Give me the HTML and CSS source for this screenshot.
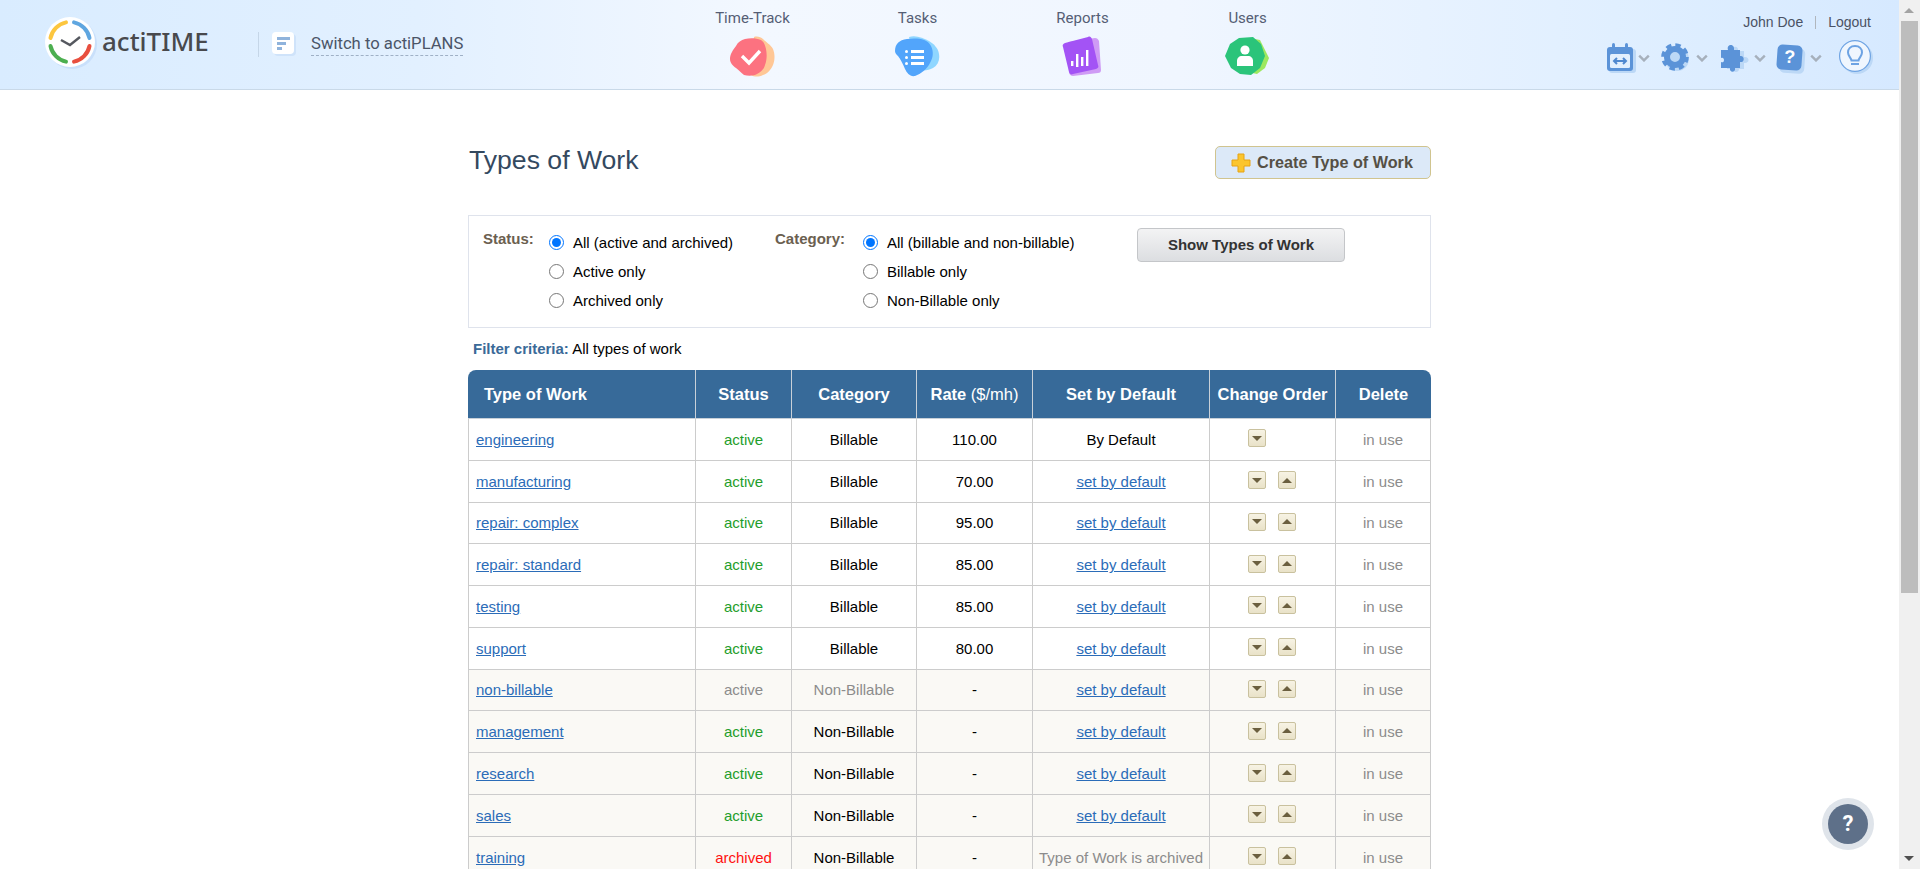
FILE: index.html
```html
<!DOCTYPE html>
<html lang="en">
<head>
  <meta charset="UTF-8">
  <title>actiTIME - Types of Work</title>
  <link rel="stylesheet" href="styles.css">
</head>
<body>
  <div class="page">
    <header class="topbar">
      <div class="brand">
        <svg class="logo" viewBox="0 0 56 56" width="56" height="56">
          <circle cx="28" cy="28" r="25" fill="#c9e0fb"/>
          <circle cx="26" cy="26" r="25" fill="#fff"/>
          <g fill="none" stroke-width="4" stroke-linecap="round">
            <path d="M6.5 22A20 20 0 0 1 22 6.4" stroke="#fcc63f"/>
            <path d="M30 6.4A20 20 0 0 1 45.5 22" stroke="#5fa6e0"/>
            <path d="M45.5 30A20 20 0 0 1 30 45.6" stroke="#e84f3f"/>
            <path d="M22 45.6A20 20 0 0 1 6.5 30" stroke="#4caf50"/>
          </g>
          <path d="M17 24l9 5 10-8" fill="none" stroke="#55585f" stroke-width="2.4"/>
        </svg>
        <span class="brand-name">actiTIME</span>
      </div>
      <div class="switch">
        <svg class="plans-icon" viewBox="0 0 24 24" width="24" height="24">
          <rect x="2" y="2" width="22" height="22" rx="4" fill="#cfe3fa"/>
          <rect x="0" y="0" width="22" height="22" rx="4" fill="#fff"/>
          <rect x="5" y="5" width="13" height="3" fill="#8fb3dc"/>
          <rect x="5" y="10" width="9" height="3" fill="#8fb3dc"/>
          <rect x="5" y="15" width="5" height="3" fill="#8fb3dc"/>
        </svg>
        <a class="switch-link">Switch to actiPLANS</a>
      </div>
      <nav class="nav">
        <div class="nav-item">
          <span class="nav-label">Time-Track</span>
          <svg viewBox="0 0 45 41" width="45" height="41">
            <path d="M24 1c3-1 7 0 9 2 3 3 8 6 10 10 2 5 2 11 0 16-2 5-6 9-10 10-4 2-9 2-12 0z" fill="#ffc796"/>
            <path d="M6 10c2-4 5-6 9-7 5-1 11-1 16 1 3 2 4 5 5 9 1 5 1 11-1 16-1 4-4 7-8 9-3 2-9 2-13 1-3-2-5-5-8-7-3-2-6-5-6-9 0-5 3-9 6-13z" fill="#fc7280"/>
            <path d="M11 21l7 7 11-12" fill="none" stroke="#fff" stroke-width="3.4" transform="translate(1 -1)"/>
          </svg>
        </div>
        <div class="nav-item">
          <span class="nav-label">Tasks</span>
          <svg viewBox="0 0 45 41" width="45" height="41">
            <path d="M14 1c7-2 14 1 20 4 5 3 9 7 10 13 1 6-1 11-6 14-5 3-12 3-17 1z" fill="#8fd6ff"/>
            <path d="M0 15C0 8 4 4 12 3c9-1 20-1 24 7 3 6 2 12-1 17-3 6-9 11-15 13-5 1-8-3-10-7-2-5-4-9-7-13-2-2-3-3-3-5z" fill="#52a5fb"/>
            <g fill="#fff">
              <rect x="10" y="14" width="3" height="3" rx="1.5"/><rect x="16" y="14" width="13" height="3"/>
              <rect x="10" y="20" width="3" height="3" rx="1.5"/><rect x="16" y="20" width="13" height="3"/>
              <rect x="10" y="26" width="3" height="3" rx="1.5"/><rect x="16" y="26" width="13" height="3"/>
            </g>
          </svg>
        </div>
        <div class="nav-item">
          <span class="nav-label">Reports</span>
          <svg viewBox="0 0 45 41" width="45" height="41">
            <path d="M8 6L35 2c2 0 3 1 4 3l2 29c0 2-1 3-3 3L13 40c-2 0-3-1-4-3z" fill="#cf9bf5"/>
            <path d="M5 7L28 1c2-1 3 0 4 2l6 26c1 2 0 3-2 4L13 38c-2 1-3 0-4-2L3 11c-1-2 0-3 2-4z" fill="#a353f5"/>
            <g fill="#fff">
              <rect x="11" y="25" width="2.4" height="5"/><rect x="16" y="18" width="2.4" height="13"/>
              <rect x="21" y="21" width="2.4" height="9"/><rect x="26" y="14" width="2.4" height="16"/>
            </g>
          </svg>
        </div>
        <div class="nav-item">
          <span class="nav-label">Users</span>
          <svg viewBox="0 0 45 41" width="45" height="41">
            <path d="M25 2l10 2 5 10 4 8-4 10-8 6-9-2z" fill="#9de85f"/>
            <path d="M14 2l14-1 8 7 4 12-5 12-9 7-11-1-9-6-6-12 5-12z" fill="#2bc47a"/>
            <circle cx="20" cy="14" r="4.6" fill="#fff"/>
            <path d="M12 30v-5c0-3 2-5 5-5h6c3 0 5 2 5 5v5z" fill="#fff"/>
          </svg>
        </div>
      </nav>
      <div class="tools">
        <div class="user-line">
          <span>John Doe</span><span class="user-sep"></span><span>Logout</span>
        </div>
        <div class="tool-row">
          <svg class="tool-icon" viewBox="0 0 30 30" width="30" height="30">
            <rect x="3" y="6" width="27" height="24" rx="3" fill="#bcd8f6"/>
            <rect x="1" y="4" width="26" height="24" rx="3" fill="#5b93d8"/>
            <rect x="6" y="0" width="3" height="7" rx="1.5" fill="#5b93d8"/>
            <rect x="19" y="0" width="3" height="7" rx="1.5" fill="#5b93d8"/>
            <rect x="4" y="11" width="20" height="14" rx="1.5" fill="#e2effd"/>
            <path d="M8 18h12M11 15l-3 3 3 3M17 15l3 3-3 3" fill="none" stroke="#4f88cf" stroke-width="2"/>
          </svg>
          <svg class="chevron chevron-first" viewBox="0 0 10 6" width="12" height="8"><path d="M1 1l4 4 4-4" fill="none" stroke="#a6b0bc" stroke-width="2"/></svg>
          <svg class="tool-icon" viewBox="0 0 30 30" width="30" height="30">
            <circle cx="16" cy="16" r="12" fill="#bcd8f6"/>
            <circle cx="14" cy="14" r="8" fill="none" stroke="#5b93d8" stroke-width="6"/>
            <circle cx="14" cy="14" r="12" fill="none" stroke="#5b93d8" stroke-width="3.6" stroke-dasharray="5.4 4.02"/>
          </svg>
          <svg class="chevron" viewBox="0 0 10 6" width="12" height="8"><path d="M1 1l4 4 4-4" fill="none" stroke="#a6b0bc" stroke-width="2"/></svg>
          <svg class="tool-icon" viewBox="0 0 30 30" width="30" height="30">
            <path d="M5 9h6c-2-5 6-6 5 0h6v6c6-1 6 7 0 6v6h-5c0 4-6 4-6 0H5z" fill="#bcd8f6" transform="translate(3 -1)"/>
            <path d="M2 7h7c-2-6 7-7 6 0h6v6c5-1 5 7 0 6v6h-5c1 5-6 5-5 0H2v-6c4 2 4-6 0-4z" fill="#5b93d8"/>
          </svg>
          <svg class="chevron" viewBox="0 0 10 6" width="12" height="8"><path d="M1 1l4 4 4-4" fill="none" stroke="#a6b0bc" stroke-width="2"/></svg>
          <span class="help-icon">?</span>
          <svg class="chevron" viewBox="0 0 10 6" width="12" height="8"><path d="M1 1l4 4 4-4" fill="none" stroke="#a6b0bc" stroke-width="2"/></svg>
          <svg class="tool-bulb" viewBox="0 0 36 36" width="36" height="36">
            <circle cx="19" cy="19" r="16" fill="#bcd8f6"/>
            <circle cx="17" cy="17" r="15.4" fill="#eff6fe" stroke="#6da3e3" stroke-width="1.2"/>
            <path d="M17 7c-4.5 0-7 3-7 6.500 0 3.500 3 5 3.500 8h7c.5-3 3.500-4.500 3.500-8C24 10 21.500 7 17 7z" fill="none" stroke="#6da3e3" stroke-width="2"/>
            <path d="M13 25h8" stroke="#6da3e3" stroke-width="2"/>
          </svg>
        </div>
      </div>
    </header>

    <main class="content">
      <div class="title-row">
        <h1>Types of Work</h1>
        <button class="create-btn">
          <svg viewBox="0 0 20 20" width="20" height="20">
            <path d="M7 1h6v6h6v6h-6v6H7v-6H1V7h6z" fill="#fbc52d" stroke="#e6a315"/>
          </svg>
          Create Type of Work
        </button>
      </div>

      <form class="filter">
        <span class="filter-label status-label">Status:</span>
        <div class="radio-col status-col">
          <label><input type="radio" name="status" checked> All (active and archived)</label>
          <label><input type="radio" name="status"> Active only</label>
          <label><input type="radio" name="status"> Archived only</label>
        </div>
        <span class="filter-label category-label">Category:</span>
        <div class="radio-col category-col">
          <label><input type="radio" name="category" checked> All (billable and non-billable)</label>
          <label><input type="radio" name="category"> Billable only</label>
          <label><input type="radio" name="category"> Non-Billable only</label>
        </div>
        <button type="button" class="show-btn">Show Types of Work</button>
      </form>

      <p class="criteria"><b>Filter criteria:</b> All types of work</p>

      <table class="work-table">
        <colgroup>
          <col class="c-name"><col class="c-status"><col class="c-cat"><col class="c-rate">
          <col class="c-def"><col class="c-order"><col class="c-del">
        </colgroup>
        <thead>
          <tr>
            <th class="th-name">Type of Work</th>
            <th>Status</th>
            <th>Category</th>
            <th>Rate <span class="unit">($/mh)</span></th>
            <th>Set by Default</th>
            <th>Change Order</th>
            <th>Delete</th>
          </tr>
        </thead>
        <tbody>
          <tr>
            <td class="name"><a>engineering</a></td><td class="on">active</td><td>Billable</td><td>110.00</td>
            <td>By Default</td>
            <td class="order"><div class="order-btns"><span class="arrow"><i class="down"></i></span><span class="arrow-gap"></span></div></td>
            <td class="muted">in use</td>
          </tr>
          <tr>
            <td class="name"><a>manufacturing</a></td><td class="on">active</td><td>Billable</td><td>70.00</td>
            <td><a>set by default</a></td>
            <td class="order"><div class="order-btns"><span class="arrow"><i class="down"></i></span><span class="arrow"><i class="up"></i></span></div></td>
            <td class="muted">in use</td>
          </tr>
          <tr>
            <td class="name"><a>repair: complex</a></td><td class="on">active</td><td>Billable</td><td>95.00</td>
            <td><a>set by default</a></td>
            <td class="order"><div class="order-btns"><span class="arrow"><i class="down"></i></span><span class="arrow"><i class="up"></i></span></div></td>
            <td class="muted">in use</td>
          </tr>
          <tr>
            <td class="name"><a>repair: standard</a></td><td class="on">active</td><td>Billable</td><td>85.00</td>
            <td><a>set by default</a></td>
            <td class="order"><div class="order-btns"><span class="arrow"><i class="down"></i></span><span class="arrow"><i class="up"></i></span></div></td>
            <td class="muted">in use</td>
          </tr>
          <tr>
            <td class="name"><a>testing</a></td><td class="on">active</td><td>Billable</td><td>85.00</td>
            <td><a>set by default</a></td>
            <td class="order"><div class="order-btns"><span class="arrow"><i class="down"></i></span><span class="arrow"><i class="up"></i></span></div></td>
            <td class="muted">in use</td>
          </tr>
          <tr>
            <td class="name"><a>support</a></td><td class="on">active</td><td>Billable</td><td>80.00</td>
            <td><a>set by default</a></td>
            <td class="order"><div class="order-btns"><span class="arrow"><i class="down"></i></span><span class="arrow"><i class="up"></i></span></div></td>
            <td class="muted">in use</td>
          </tr>
          <tr class="nonbill">
            <td class="name"><a>non-billable</a></td><td class="muted">active</td><td class="muted">Non-Billable</td><td>-</td>
            <td><a>set by default</a></td>
            <td class="order"><div class="order-btns"><span class="arrow"><i class="down"></i></span><span class="arrow"><i class="up"></i></span></div></td>
            <td class="muted">in use</td>
          </tr>
          <tr class="nonbill">
            <td class="name"><a>management</a></td><td class="on">active</td><td>Non-Billable</td><td>-</td>
            <td><a>set by default</a></td>
            <td class="order"><div class="order-btns"><span class="arrow"><i class="down"></i></span><span class="arrow"><i class="up"></i></span></div></td>
            <td class="muted">in use</td>
          </tr>
          <tr class="nonbill">
            <td class="name"><a>research</a></td><td class="on">active</td><td>Non-Billable</td><td>-</td>
            <td><a>set by default</a></td>
            <td class="order"><div class="order-btns"><span class="arrow"><i class="down"></i></span><span class="arrow"><i class="up"></i></span></div></td>
            <td class="muted">in use</td>
          </tr>
          <tr class="nonbill">
            <td class="name"><a>sales</a></td><td class="on">active</td><td>Non-Billable</td><td>-</td>
            <td><a>set by default</a></td>
            <td class="order"><div class="order-btns"><span class="arrow"><i class="down"></i></span><span class="arrow"><i class="up"></i></span></div></td>
            <td class="muted">in use</td>
          </tr>
          <tr class="nonbill">
            <td class="name"><a>training</a></td><td class="off">archived</td><td>Non-Billable</td><td>-</td>
            <td class="muted">Type of Work is archived</td>
            <td class="order"><div class="order-btns"><span class="arrow"><i class="down"></i></span><span class="arrow"><i class="up"></i></span></div></td>
            <td class="muted">in use</td>
          </tr>
        </tbody>
      </table>
    </main>
    <div class="help-float">?</div>
  </div>

  <div class="scrollbar">
    <span class="sb-arrow sb-up"></span>
    <span class="sb-thumb"></span>
    <span class="sb-arrow sb-down"></span>
  </div>
</body>
</html>
```

FILE: styles.css
```css
html, body {
  margin: 0;
  height: 100%;
  overflow: hidden;
}
body {
  display: flex;
  font-family: "Liberation Sans", Arial, sans-serif;
  font-size: 15px;
  color: #000;
  background: #fff;
}
.page {
  flex: 1;
  min-width: 0;
  height: 100%;
  overflow: hidden;
  position: relative;
}

/* top bar */
.topbar {
  display: flex;
  height: 89px;
  border-bottom: 1px solid #c9d9e8;
  background: linear-gradient(90deg, #d9ecff 0%, #e2f0ff 22%, #f3f8ff 40%, #f0f6ff 62%, #e0efff 85%, #d6e9ff 100%);
}
.brand {
  display: flex;
  align-items: flex-start;
  padding: 16px 0 0 44px;
  width: 214px;
}
.logo {
  flex: none;
}
.brand-name {
  font-family: "Noto Sans", sans-serif;
  font-weight: 500;
  font-size: 26px;
  line-height: 50px;
  margin-left: 2px;
  color: #48494d;
}
.switch {
  display: flex;
  align-items: flex-start;
  width: 398px;
  height: 25px;
  margin-top: 32px;
  padding-left: 13px;
  border-left: 1px solid #c5d6e8;
}
.plans-icon {
  flex: none;
}
.switch-link {
  font-family: Roboto, sans-serif;
  font-size: 16.67px;
  line-height: 20px;
  margin: 2px 0 0 15px;
  padding-bottom: 1px;
  color: #4b5568;
  border-bottom: 1px dashed #9fb0c6;
}
.nav {
  display: flex;
  padding-top: 9px;
}
.nav-item {
  width: 165px;
  display: flex;
  flex-direction: column;
  align-items: center;
  gap: 9px;
}
.nav-label {
  font-family: Roboto, sans-serif;
  font-size: 15px;
  line-height: 18px;
  color: #555e75;
}
.tools {
  margin-left: auto;
  width: 294px;
  padding-right: 28px;
  display: flex;
  flex-direction: column;
  box-sizing: border-box;
}
.user-line {
  display: flex;
  justify-content: flex-end;
  align-items: center;
  height: 16px;
  margin-top: 14px;
  font-size: 14px;
  color: #4a5264;
}
.user-sep {
  width: 1px;
  height: 13px;
  margin: 0 12px;
  background: #b0b6bd;
}
.tool-row {
  display: flex;
  align-items: center;
  justify-content: flex-end;
  margin-top: 10px;
}
.tool-icon {
  flex: none;
}
.chevron {
  flex: none;
  margin: 0 11px 0 5px;
}
.chevron-first {
  margin-left: 2px;
}
.help-icon {
  width: 25px;
  height: 25px;
  margin-right: 3px;
  border-radius: 5px;
  background: #5b93d8;
  box-shadow: 3px 3px 0 #bcd8f6;
  color: #fff;
  font-weight: bold;
  font-size: 18px;
  line-height: 25px;
  text-align: center;
  transform: rotate(4deg);
}
.tool-bulb {
  flex: none;
  margin: -1px -3px 0 5px;
}

/* main */
.content {
  width: 963px;
  margin: 0 auto;
}
.title-row {
  display: flex;
  justify-content: space-between;
  align-items: flex-start;
  height: 125px;
  padding-top: 55px;
  box-sizing: border-box;
}
h1 {
  margin: 0 0 0 1px;
  font-weight: normal;
  font-size: 26.6px;
  line-height: 30px;
  color: #34495f;
}
.create-btn {
  display: flex;
  align-items: center;
  gap: 6px;
  width: 216px;
  height: 33px;
  margin-top: 1px;
  padding: 0 0 0 15px;
  border: 1px solid #d0c48f;
  border-radius: 5px;
  background: #dce9f8;
  font-family: inherit;
  font-weight: bold;
  font-size: 16.2px;
  color: #555045;
}
.filter {
  display: flex;
  align-items: flex-start;
  height: 113px;
  box-sizing: border-box;
  border: 1px solid #dfe3ec;
  padding: 12px 14px;
}
.filter-label {
  font-weight: bold;
  font-size: 15px;
  line-height: 22px;
  color: #6b6050;
}
.status-label {
  width: 66px;
}
.category-label {
  width: 88px;
}
.radio-col {
  display: flex;
  flex-direction: column;
  gap: 7px;
  padding-top: 3px;
}
.radio-col label {
  display: flex;
  align-items: center;
  height: 22px;
  white-space: nowrap;
}
.radio-col input {
  width: 15px;
  height: 15px;
  margin: 0 9px 0 0;
}
.status-col {
  width: 226px;
}
.category-col {
  width: 274px;
}
.show-btn {
  width: 208px;
  height: 34px;
  padding: 0 0 2px;
  border: 1px solid #c4c6c9;
  border-radius: 4px;
  background: linear-gradient(#f3f3f4, #dcdee1);
  font-family: inherit;
  font-weight: bold;
  font-size: 15px;
  color: #333;
}
.criteria {
  margin: 0;
  height: 42px;
  padding: 11px 0 0 5px;
  box-sizing: border-box;
  line-height: 20px;
}
.criteria b {
  color: #3a6a98;
}

/* table */
.work-table {
  width: 963px;
  table-layout: fixed;
  border-collapse: separate;
  border-spacing: 0;
}
.c-name { width: 228px; }
.c-status { width: 96px; }
.c-cat { width: 125px; }
.c-rate { width: 116px; }
.c-def { width: 177px; }
.c-order { width: 126px; }
.c-del { width: 95px; }
.work-table th {
  height: 48px;
  padding: 0;
  background: #376a99;
  color: #fff;
  font-size: 16.5px;
  text-align: center;
  border-right: 1px solid #c8d0d8;
  border-bottom: 1px solid #c8d0d8;
}
.work-table th:first-child {
  border-top-left-radius: 8px;
}
.work-table th:last-child {
  border-top-right-radius: 8px;
  border-right: none;
}
.work-table .th-name {
  text-align: left;
  padding-left: 16px;
}
.unit {
  font-weight: normal;
}
.work-table td {
  height: 41.78px;
  box-sizing: border-box;
  padding: 0;
  text-align: center;
  border-right: 1px solid #ccc;
  border-bottom: 1px solid #ccc;
}
.work-table td:first-child {
  border-left: 1px solid #ccc;
}
.work-table .name {
  text-align: left;
  padding-left: 7px;
}
.work-table a {
  color: #2b6cb8;
  text-decoration: underline;
}
.nonbill td {
  background: #faf9f5;
}
.on { color: #1f9e2c; }
.off { color: #f11; }
.muted { color: #8c8c8c; }
.order-btns {
  display: flex;
  justify-content: center;
  gap: 12px;
  padding: 0 1px 2px 0;
}
.arrow, .arrow-gap {
  width: 18px;
  height: 18px;
  box-sizing: border-box;
}
.arrow {
  display: flex;
  align-items: center;
  justify-content: center;
  border: 1px solid #c9c19e;
  border-radius: 2px;
  background: linear-gradient(#f7f3e4, #e9e2c8);
}
.arrow i {
  width: 0;
  height: 0;
  border-left: 5px solid transparent;
  border-right: 5px solid transparent;
}
.arrow .down {
  border-top: 5px solid #6b5f3f;
}
.arrow .up {
  border-bottom: 5px solid #6b5f3f;
}

/* floating help */
.help-float {
  position: absolute;
  left: 1828px;
  top: 804px;
  width: 40px;
  height: 40px;
  border-radius: 50%;
  background: #5e7089;
  box-shadow: 0 0 0 6px #dfe4ea;
  color: #fff;
  font-family: Roboto, sans-serif;
  font-weight: bold;
  font-size: 22px;
  line-height: 40px;
  text-align: center;
}

/* scrollbar */
.scrollbar {
  flex: none;
  width: 21px;
  height: 100%;
  position: relative;
  background: #f0f0f0;
}
.sb-thumb {
  display: block;
  width: 17px;
  height: 572px;
  margin: 21px 0 0 2px;
  background: #bdbdbd;
}
.sb-arrow {
  position: absolute;
  left: 5px;
  width: 0;
  height: 0;
  border-left: 5.5px solid transparent;
  border-right: 5.5px solid transparent;
}
.sb-up {
  top: 8px;
  border-bottom: 5px solid #a3a3a3;
}
.sb-down {
  bottom: 8px;
  border-top: 5px solid #505050;
}
```
